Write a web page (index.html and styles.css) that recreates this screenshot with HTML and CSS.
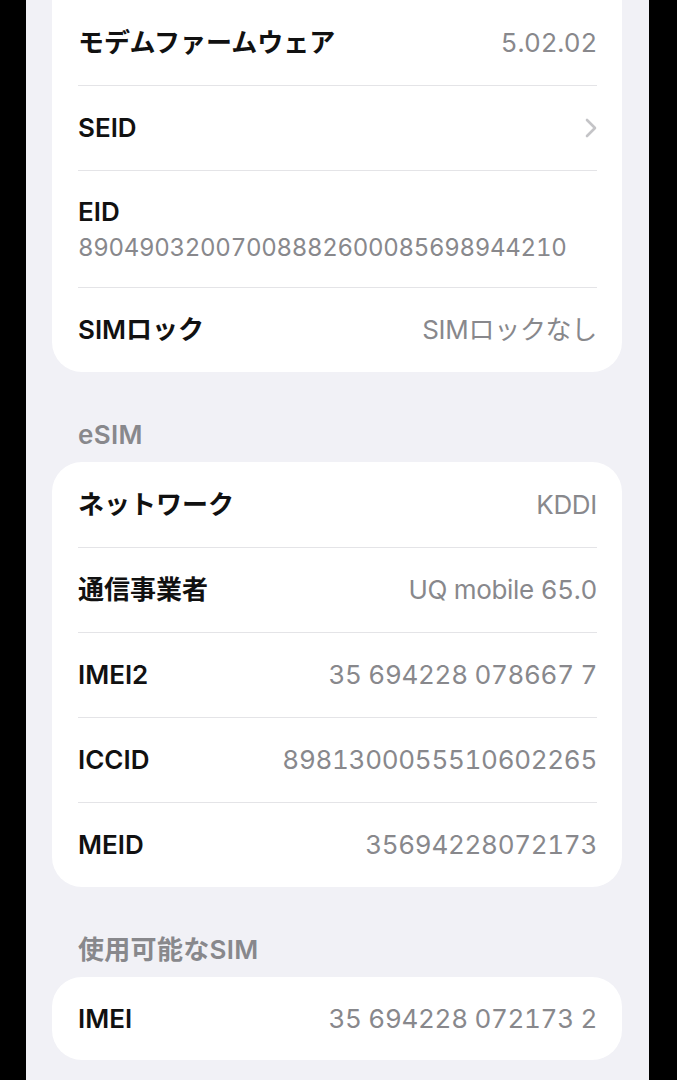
FILE: index.html
```html
<!DOCTYPE html>
<html lang="ja">
<head>
    <meta charset="UTF-8">
    <meta name="viewport" content="width=device-width, initial-scale=1.0">
    <title>情報</title>
    <link rel="stylesheet" href="styles.css">
</head>
<body>

    <div class="screen">

        <div class="card card-top">
            <div class="row">
                <span class="label">モデムファームウェア</span>
                <span class="value">5.02.02</span>
            </div>
            <div class="row">
                <span class="label">SEID</span>
                <svg class="chevron" width="12" height="20" viewBox="0 0 12 20">
                    <path d="M2 2 L10 10 L2 18" fill="none" stroke="#c4c4c7" stroke-width="2.6" stroke-linecap="round" stroke-linejoin="round"/>
                </svg>
            </div>
            <div class="row row-stack">
                <span class="label">EID</span>
                <span class="sub">89049032007008882600085698944210</span>
            </div>
            <div class="row">
                <span class="label">SIMロック</span>
                <span class="value">SIMロックなし</span>
            </div>
        </div>

        <div class="section-title">eSIM</div>
        <div class="card">
            <div class="row">
                <span class="label">ネットワーク</span>
                <span class="value">KDDI</span>
            </div>
            <div class="row">
                <span class="label">通信事業者</span>
                <span class="value">UQ mobile 65.0</span>
            </div>
            <div class="row">
                <span class="label">IMEI2</span>
                <span class="value">35 694228 078667 7</span>
            </div>
            <div class="row">
                <span class="label">ICCID</span>
                <span class="value">8981300055510602265</span>
            </div>
            <div class="row">
                <span class="label">MEID</span>
                <span class="value">35694228072173</span>
            </div>
        </div>

        <div class="section-title">使用可能なSIM</div>
        <div class="card card-single">
            <div class="row">
                <span class="label">IMEI</span>
                <span class="value">35 694228 072173 2</span>
            </div>
        </div>

    </div>

</body>
</html>
```

FILE: styles.css
```css
body {
    margin: 0;
    padding: 0;
    background-color: #000;
    font-family: Inter, "Noto Sans CJK JP", sans-serif;
    color: #111;
}

.screen {
    width: 623px;
    height: 1080px;
    margin-left: 26px;
    padding: 0 27px 0 26px;
    box-sizing: border-box;
    background-color: #f1f1f6;
    overflow: hidden;
}

.card {
    background-color: #fff;
    border-radius: 30px;
    padding: 0 25px 0 26px;
}

.card-top {
    border-top-left-radius: 0;
    border-top-right-radius: 0;
}

.row {
    display: flex;
    align-items: center;
    justify-content: space-between;
    height: 85px;
    box-sizing: border-box;
}

.row + .row {
    border-top: 1.5px solid #e4e4e7;
}

.card-single .row {
    height: 83px;
}

.row-stack {
    flex-direction: column;
    align-items: flex-start;
    justify-content: flex-start;
    height: 117px;
    padding-top: 27px;
}

.label {
    font-size: 26px;
    font-weight: 600;
    line-height: 28px;
    letter-spacing: 0;
}

.value {
    font-size: 26px;
    line-height: 28px;
    color: #88888c;
    letter-spacing: -0.3px;
    font-variant-numeric: tabular-nums;
}

.sub {
    font-size: 24px;
    line-height: 28px;
    margin-top: 8px;
    color: #88888c;
    letter-spacing: -0.3px;
    font-variant-numeric: tabular-nums;
}

.section-title {
    padding: 50px 0 14px 26px;
    font-size: 26px;
    line-height: 26px;
    font-weight: 600;
    letter-spacing: 0.3px;
    color: #88888c;
}
```
